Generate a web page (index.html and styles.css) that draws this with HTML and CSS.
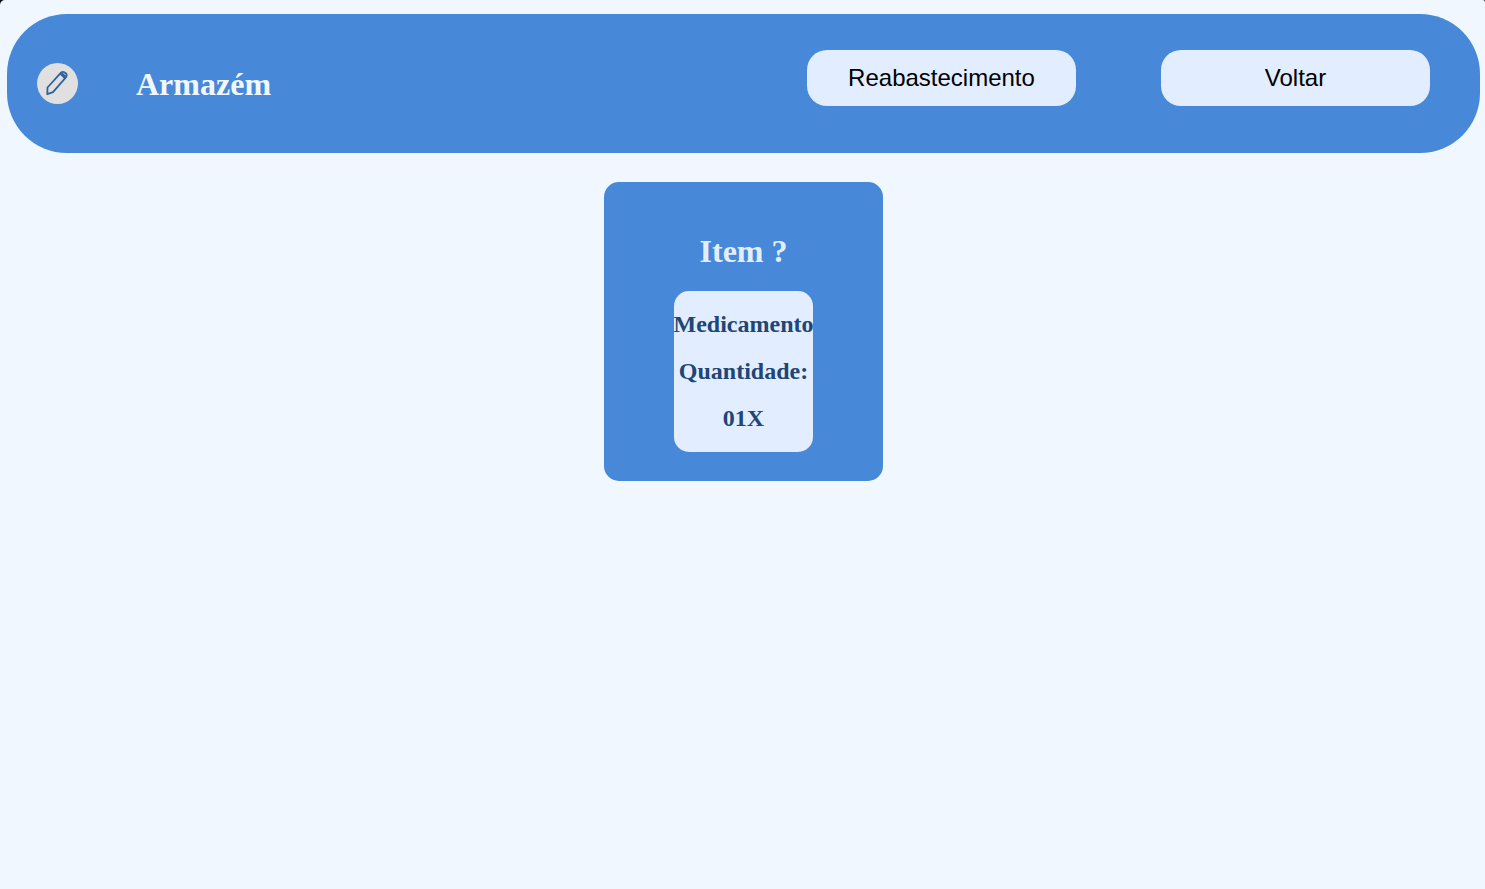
FILE: index.html
```html
<!DOCTYPE html>
<html lang="pt">
<head>
  <meta charset="utf-8">
  <meta name="viewport" content="width=device-width, initial-scale=1">
  <title>Armazém</title>
  <link rel="stylesheet" href="styles.css">
</head>
<body>
  <div class="page">
    <header class="header">
      <button class="edit" type="button" aria-label="Editar">
        <svg class="edit-icon" viewBox="0 0 41 41" aria-hidden="true">
          <path d="M10.500 24.500 24 9.700Q25.600 8.300 27.300 9.200L29.300 10.800Q30.500 12.200 29.300 13.800L16 29.200L10.300 31.200Z"/>
          <path d="M23.300 10.500 27.900 15.200M25 10.300 28.600 13.600"/>
        </svg>
      </button>
      <h1 class="title">Armazém</h1>
      <nav class="actions">
        <button class="action" type="button">Reabastecimento</button>
        <button class="action" type="button">Voltar</button>
      </nav>
    </header>
    <main class="items">
      <section class="card">
        <h2 class="card-title">Item ?</h2>
        <div class="details">
          <p class="detail">Medicamento</p>
          <p class="detail">Quantidade:</p>
          <p class="detail">01X</p>
        </div>
      </section>
    </main>
  </div>
</body>
</html>
```
FILE: styles.css
```css
* {
  box-sizing: border-box;
}

html {
  background: #060a1c;
}

body {
  margin: 0;
  font-family: "Liberation Serif", "Times New Roman", serif;
}

.page {
  min-height: 100vh;
  padding: 14px 5px 14px 7px;
  border-radius: 5px 2px 0 0;
  background: #f0f7ff;
}

.header {
  display: flex;
  align-items: center;
  min-height: 139px;
  padding: 0 50px 0 30px;
  border-radius: 60px;
  background: #4788d8;
}

.edit {
  flex: none;
  width: 41px;
  height: 41px;
  padding: 0;
  border: 0;
  border-radius: 50%;
  background: #e0e0e0;
  cursor: pointer;
}

.edit-icon {
  display: block;
  width: 100%;
  fill: none;
  stroke: #2f619f;
  stroke-width: 1.8;
  stroke-linejoin: round;
}

.title {
  margin: 0 auto 0 58px;
  color: #f0f7ff;
  font-size: 32px;
  line-height: 36px;
}

.actions {
  display: flex;
  gap: 85px;
  padding-bottom: 11px;
}

.action {
  width: 269px;
  height: 56px;
  border: 0;
  border-radius: 20px;
  background: #e2eeff;
  color: #000;
  font-family: "Liberation Sans", Arial, sans-serif;
  font-size: 24px;
  cursor: pointer;
}

.items {
  display: flex;
  justify-content: center;
  padding-top: 29px;
}

.card {
  width: 279px;
  padding: 51px 70px 29px;
  border-radius: 15px;
  background: #4788d8;
  text-align: center;
}

.card-title {
  margin: 0 0 22px;
  color: #e2eeff;
  font-size: 32px;
  line-height: 36px;
}

.details {
  display: flex;
  flex-direction: column;
  align-items: center;
  gap: 20px;
  padding: 20px 0;
  border-radius: 15px;
  background: #e2eeff;
}

.detail {
  margin: 0;
  color: #204577;
  font-size: 24px;
  font-weight: bold;
  line-height: 27px;
}
```
